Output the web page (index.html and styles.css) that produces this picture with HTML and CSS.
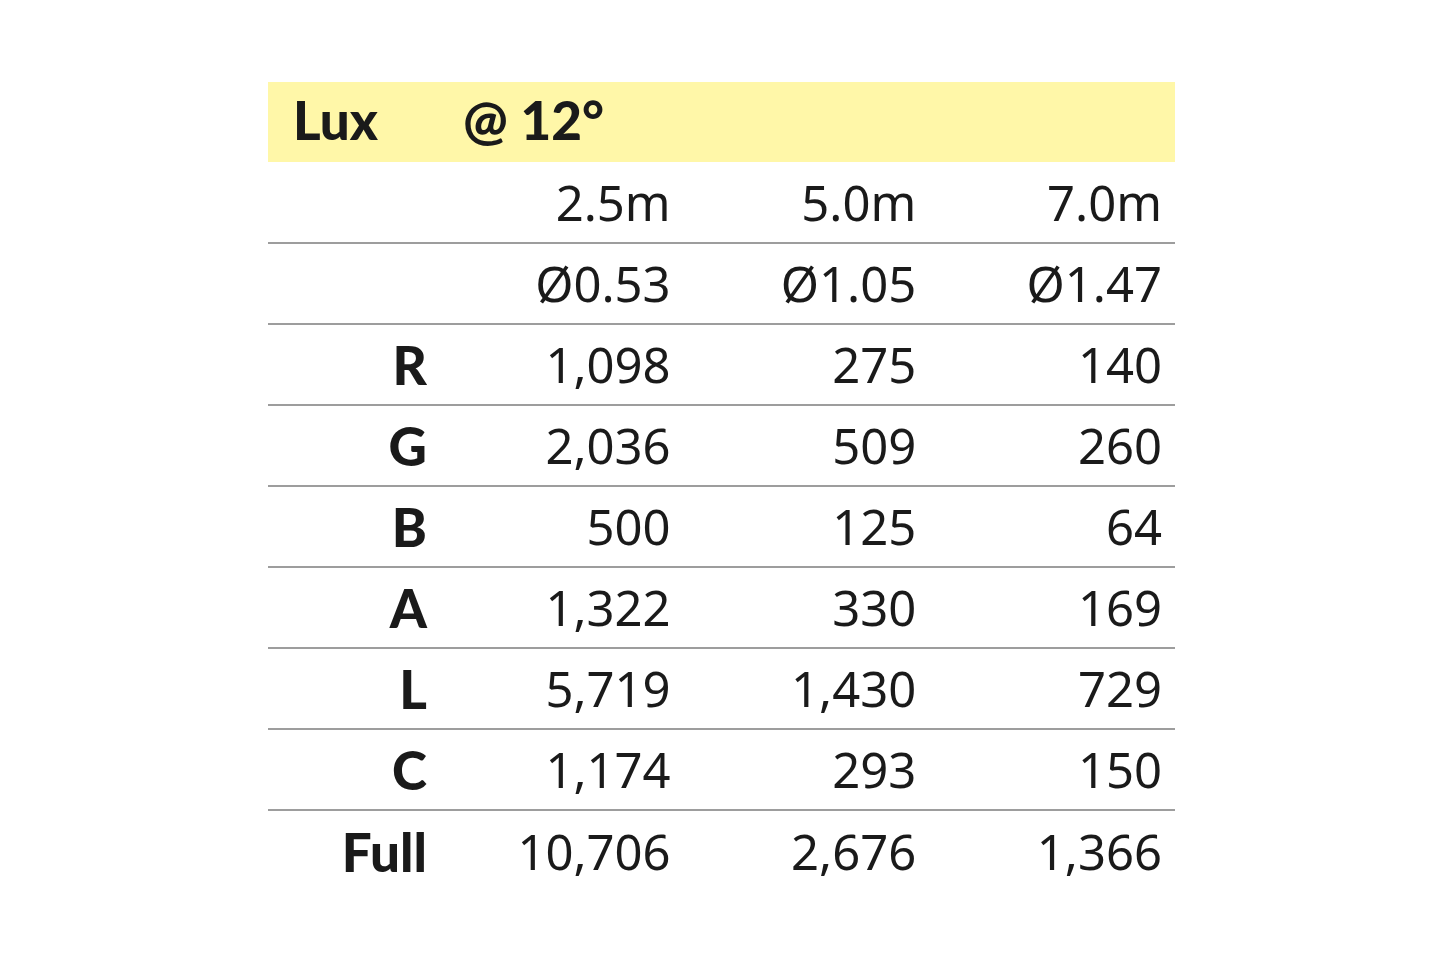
FILE: index.html
```html
<!DOCTYPE html>
<html>
<head>
<meta charset="utf-8">
<link rel="stylesheet" href="styles.css">
</head>
<body>
<table class="lux">
  <tr class="head">
    <th class="lbl-h">Lux</th>
    <th class="angle" colspan="3">@ 12°</th>
  </tr>
  <tr class="row">
    <td class="lbl"></td><td>2.5m</td><td>5.0m</td><td>7.0m</td>
  </tr>
  <tr class="row">
    <td class="lbl"></td><td>Ø0.53</td><td>Ø1.05</td><td>Ø1.47</td>
  </tr>
  <tr class="row">
    <td class="lbl">R</td><td>1,098</td><td>275</td><td>140</td>
  </tr>
  <tr class="row">
    <td class="lbl">G</td><td>2,036</td><td>509</td><td>260</td>
  </tr>
  <tr class="row">
    <td class="lbl">B</td><td>500</td><td>125</td><td>64</td>
  </tr>
  <tr class="row">
    <td class="lbl">A</td><td>1,322</td><td>330</td><td>169</td>
  </tr>
  <tr class="row">
    <td class="lbl">L</td><td>5,719</td><td>1,430</td><td>729</td>
  </tr>
  <tr class="row">
    <td class="lbl">C</td><td>1,174</td><td>293</td><td>150</td>
  </tr>
  <tr class="row last">
    <td class="lbl">Full</td><td>10,706</td><td>2,676</td><td>1,366</td>
  </tr>
</table>
</body>
</html>
```
FILE: styles.css
```css
html, body {
  margin: 0;
  padding: 0;
  background: #ffffff;
}
body {
  padding: 82px 0 0 268px;
  font-family: "Noto Sans", "Open Sans", sans-serif;
  color: #1a1a1a;
}
.lux {
  width: 907px;
  border-collapse: collapse;
  table-layout: fixed;
}
.lux td, .lux th {
  padding: 0;
}
.head {
  background: #fff7a8;
  height: 80px;
}
.head th {
  text-align: left;
  font-family: "Lato", sans-serif;
  font-weight: 900;
  font-size: 53px;
  padding: 0 0 6px 25px;
  vertical-align: middle;
  line-height: 1;
}
.lbl-h {
  width: 145px;
}
.row {
  height: 81px;
  border-bottom: 2px solid #9d9d9d;
}
.row.last {
  border-bottom: none;
}
.row td {
  text-align: right;
  font-size: 49px;
  font-weight: 400;
  padding-right: 13px;
  vertical-align: middle;
  line-height: 1;
}
.row td.lbl {
  font-family: "Lato", sans-serif;
  font-weight: 900;
  font-size: 53px;
  padding-right: 11px;
}
```
